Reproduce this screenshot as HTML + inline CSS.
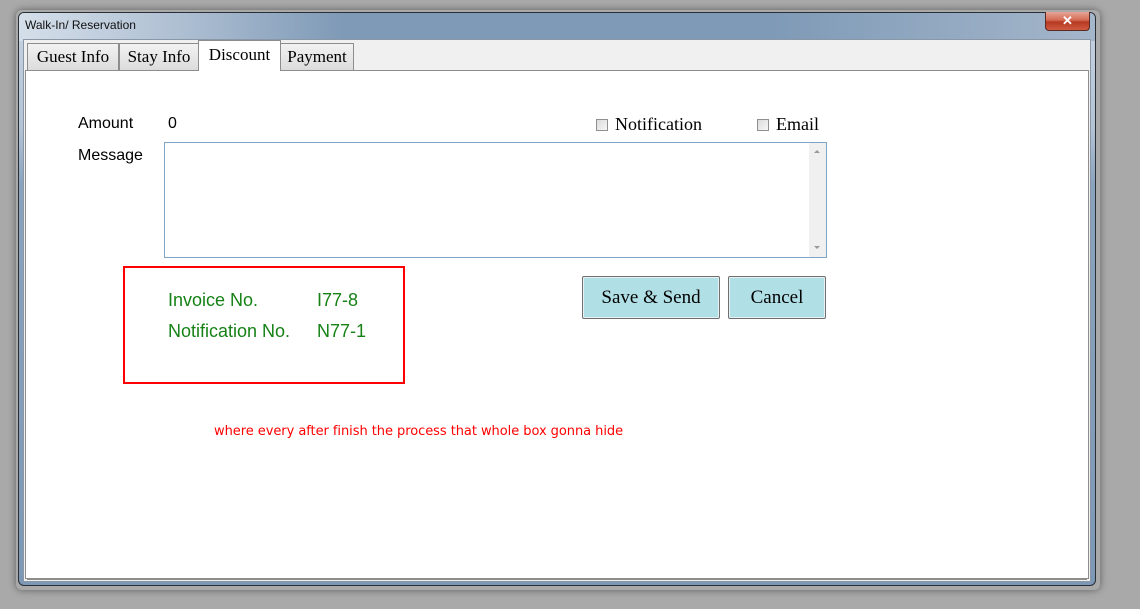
<!DOCTYPE html>
<html><head><style>
body{margin:0;width:1140px;height:609px;background:#a9a9a9;position:relative;overflow:hidden;font-family:"Liberation Sans",sans-serif}
.a{position:absolute}
.serif{font-family:"Liberation Serif",serif;color:#000}
</style></head><body>
<div class="a" style="left:16px;top:10px;width:1084px;height:580px;border-radius:6px;box-shadow:0 0 8px rgba(0,0,0,.45)"></div>
<div class="a" style="left:18px;top:12px;width:1078px;height:574px;border:1px solid #2a2f36;border-radius:6px;box-sizing:border-box;background:linear-gradient(180deg,#c6d3e0 0,#b4c4d6 20%,#8aa3bd 30%,#7d98b6 100%)"></div>
<div class="a" style="left:19px;top:13px;width:1076px;height:28px;border-radius:5px 5px 0 0;background:linear-gradient(90deg,#d5dfea 0,#aebfd2 15%,#7f9ab7 30%,#7f9ab7 70%,#a4b6ca 100%)"></div>
<div class="a" style="left:25px;top:18px;font-size:12px;color:#111">Walk-In/ Reservation</div>
<div class="a" style="left:1045px;top:12px;width:45px;height:19px;border:1px solid #5a2a24;border-top:none;border-radius:0 0 4px 4px;box-sizing:border-box;background:linear-gradient(180deg,#e7a595 0,#d46a55 45%,#b83a22 55%,#cf5a40 100%);color:#fff;font-weight:bold;font-size:13px;text-align:center;line-height:17px">✕</div>
<div class="a" style="left:23px;top:39px;width:1068px;height:543px;background:#f0f0f0;border:1px solid #8a97a6;box-sizing:border-box"></div>
<div class="a" style="left:25px;top:70px;width:1064px;height:509px;background:#fff;border:1px solid #8d8d8d;box-sizing:border-box"></div>
<div class="a" style="left:27px;top:577px;width:1060px;height:2px;border-bottom:1px solid #8d8d8d"></div>
<div class="a serif" style="left:27px;top:43px;width:92px;height:27px;border:1px solid #8d8d8d;border-bottom:none;box-sizing:border-box;background:linear-gradient(#f2f2f2,#dcdcdc);font-size:17px;text-align:center;line-height:26px">Guest Info</div>
<div class="a serif" style="left:119px;top:43px;width:80px;height:27px;border:1px solid #8d8d8d;border-bottom:none;box-sizing:border-box;background:linear-gradient(#f2f2f2,#dcdcdc);font-size:17px;text-align:center;line-height:26px">Stay Info</div>
<div class="a serif" style="left:198px;top:40px;width:83px;height:31px;border:1px solid #8d8d8d;border-bottom:none;box-sizing:border-box;background:#fff;font-size:17px;text-align:center;line-height:27px">Discount</div>
<div class="a serif" style="left:280px;top:43px;width:74px;height:27px;border:1px solid #8d8d8d;border-bottom:none;box-sizing:border-box;background:linear-gradient(#f2f2f2,#dcdcdc);font-size:17px;text-align:center;line-height:26px">Payment</div>
<div class="a" style="left:78px;top:115px;font-size:16px;color:#000">Amount</div>
<div class="a" style="left:168px;top:115px;font-size:16px;color:#000">0</div>
<div class="a" style="left:78px;top:147px;font-size:16px;color:#000">Message</div>
<div class="a" style="left:596px;top:119px;width:12px;height:12px;border:1px solid #8e8f8f;box-sizing:border-box;background:linear-gradient(135deg,#dcdcdc,#f6f6f6)"></div>
<div class="a serif" style="left:615px;top:114px;font-size:18px">Notification</div>
<div class="a" style="left:757px;top:119px;width:12px;height:12px;border:1px solid #8e8f8f;box-sizing:border-box;background:linear-gradient(135deg,#dcdcdc,#f6f6f6)"></div>
<div class="a serif" style="left:776px;top:114px;font-size:18px">Email</div>
<div class="a" style="left:164px;top:142px;width:663px;height:116px;border:1px solid #7fa4c6;box-sizing:border-box;background:#fff"></div>
<div class="a" style="left:809px;top:143px;width:17px;height:114px;background:#f0f0f0"></div>
<div class="a" style="left:814px;top:150px;width:0;height:0;border:3px solid transparent;border-bottom:3px solid #999;border-top:none"></div>
<div class="a" style="left:814px;top:246px;width:0;height:0;border:3px solid transparent;border-top:3px solid #999;border-bottom:none"></div>
<div class="a serif" style="left:582px;top:276px;width:138px;height:43px;border:1px solid #6f6f6f;border-radius:2px;box-sizing:border-box;background:#b0e0e6;box-shadow:inset 0 0 0 1px #e6f2f4;font-size:19px;text-align:center;line-height:41px">Save &amp; Send</div>
<div class="a serif" style="left:728px;top:276px;width:98px;height:43px;border:1px solid #6f6f6f;border-radius:2px;box-sizing:border-box;background:#b0e0e6;box-shadow:inset 0 0 0 1px #e6f2f4;font-size:19px;text-align:center;line-height:41px">Cancel</div>
<div class="a" style="left:123px;top:266px;width:282px;height:118px;border:2px solid #f00;box-sizing:border-box"></div>
<div class="a" style="left:168px;top:290px;font-size:18px;color:#168216">Invoice No.</div>
<div class="a" style="left:317px;top:290px;font-size:18px;color:#168216">I77-8</div>
<div class="a" style="left:168px;top:321px;font-size:18px;color:#168216">Notification No.</div>
<div class="a" style="left:317px;top:321px;font-size:18px;color:#168216">N77-1</div>
<div class="a" style="left:214px;top:424px;font-size:13px;color:#f00;font-family:'DejaVu Sans','Liberation Sans',sans-serif;letter-spacing:-0.05px">where every after finish the process that whole box gonna hide</div>
</body></html>
